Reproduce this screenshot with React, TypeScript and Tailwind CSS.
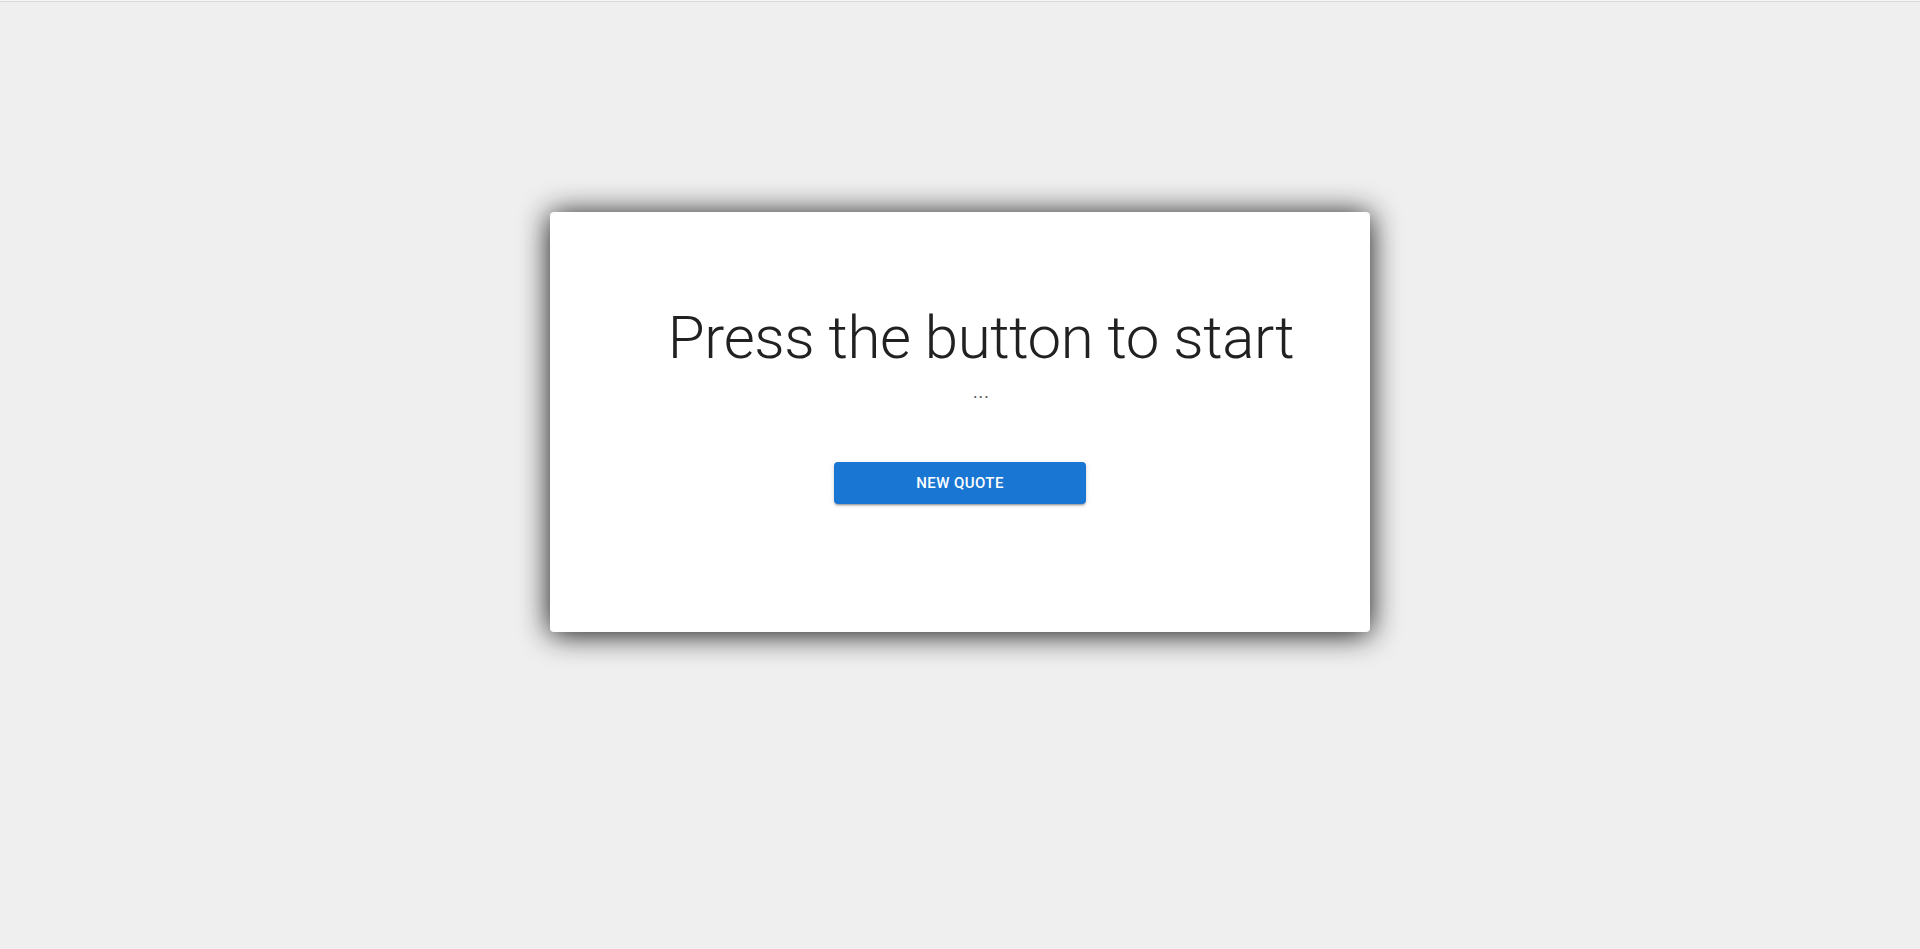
export default function App() {
  return (
    <div className="min-h-[949px] bg-[#efefef] font-['Roboto',sans-serif]">
      <div className="h-px bg-[#f6f6f6]" />
      <div className="h-px bg-[#d9d9d9]" />

      <div className="flex justify-center pt-[210px]">
        <div className="w-[820px] h-[420px] bg-white rounded-[4px] shadow-[0_2px_30px_rgba(0,0,0,0.95)] flex flex-col items-center">
          {/* quote */}
          <div className="w-full pl-[42px] pt-[90px] text-center">
            <h2 className="text-[60px] leading-[72px] font-light text-[#212121] tracking-[-0.4px]">
              Press the button to start
            </h2>
            <p className="text-[24px] leading-[32px] font-light text-[#555]">...</p>
          </div>

          <button className="mt-[56px] w-[252px] h-[42px] rounded-[4px] bg-[#1976d2] text-white text-[15px] font-medium uppercase tracking-[0.43px] shadow-[0_3px_1px_-2px_rgba(0,0,0,0.2),0_2px_2px_0_rgba(0,0,0,0.14),0_1px_5px_0_rgba(0,0,0,0.12)]">
            New Quote
          </button>
        </div>
      </div>
    </div>
  );
}
